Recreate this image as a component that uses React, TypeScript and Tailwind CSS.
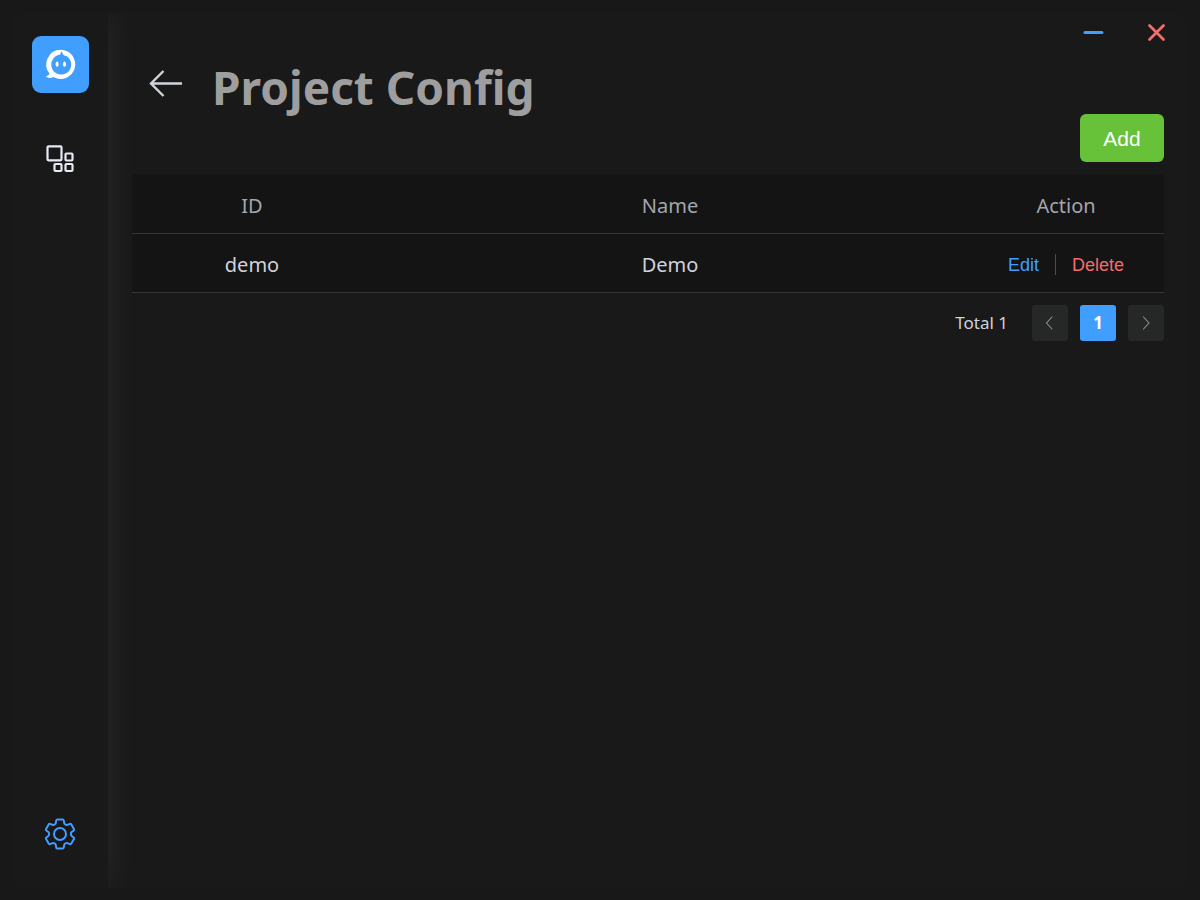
import React from "react";

const toothPoints: [number, number][] = [
  [-4.3, -10.1],
  [-3.6, -14.6],
  [3.6, -14.6],
  [4.3, -10.1],
];

function gearPath() {
  const pts: [number, number][] = [];
  for (let i = 0; i < 6; i++) {
    const a = (i * Math.PI) / 3;
    for (const [x, y] of toothPoints) {
      pts.push([
        x * Math.cos(a) - y * Math.sin(a),
        x * Math.sin(a) + y * Math.cos(a),
      ]);
    }
  }
  const n = pts.length;
  const toward = (p: [number, number], q: [number, number]) => {
    const d = Math.hypot(q[0] - p[0], q[1] - p[1]);
    const t = 1 / d;
    return `${(p[0] + (q[0] - p[0]) * t).toFixed(2)} ${(p[1] + (q[1] - p[1]) * t).toFixed(2)}`;
  };
  return (
    pts
      .map((p, i) => {
        const before = toward(p, pts[(i + n - 1) % n]);
        const after = toward(p, pts[(i + 1) % n]);
        return `${i ? "L" : "M"}${before}Q${p[0].toFixed(2)} ${p[1].toFixed(2)} ${after}`;
      })
      .join("") + "Z"
  );
}

function LogoIcon() {
  return (
    <svg viewBox="0 0 57 57" className="size-[57px]" aria-hidden="true">
      <path
        fill="#fff"
        fillRule="evenodd"
        d="M28.8 13.800A14.600 14.600 0 1 1 21.300 41C19 42.700 16.300 42.500 14 40.200C16 40 17 39 17.500 37.600A14.600 14.600 0 0 1 28.800 13.800ZM28.400 18.600A10 10 0 1 0 34.600 20.100C32.300 20.200 30.600 19 29.900 15.600C28.900 16.400 28.300 17.400 28.400 18.600Z"
      />
      <ellipse cx="25.100" cy="28.200" rx="1.500" ry="2.600" fill="#fff" />
      <ellipse cx="32.500" cy="28.200" rx="1.500" ry="2.600" fill="#fff" />
    </svg>
  );
}

function GridIcon() {
  return (
    <svg viewBox="0 0 28 28" className="size-7" fill="none" stroke="#e5eaf3" strokeWidth="2.200" aria-hidden="true">
      <rect x="1.500" y="1.300" width="14" height="14" rx="1" />
      <rect x="19.500" y="8.500" width="7" height="7" rx="1" />
      <rect x="8.500" y="19" width="7" height="7" rx="1" />
      <rect x="19.500" y="19" width="7" height="7" rx="1" />
    </svg>
  );
}

function GearIcon() {
  return (
    <svg viewBox="-16 -16 32 32" className="size-8" fill="none" stroke="#409eff" strokeWidth="2" aria-hidden="true">
      <path d={gearPath()} />
      <circle r="6" />
    </svg>
  );
}

function Chevron({ d }: { d: string }) {
  return (
    <svg viewBox="0 0 18 18" className="size-[18px]" fill="none" stroke="#8d9095" strokeWidth="1.100" strokeLinecap="round" aria-hidden="true">
      <path d={d} />
    </svg>
  );
}

const rows = [{ id: "demo", name: "Demo" }];

export default function App() {
  return (
    <div className="flex min-h-screen bg-[#181818] p-3 font-['Noto_Sans',sans-serif] text-[#cfd3dc]">
      <div className="flex min-w-0 flex-1 overflow-hidden rounded-xl bg-[#191919]">
        <aside className="z-10 flex w-24 shrink-0 flex-col items-center bg-[#191919] pt-6 pb-[38px] shadow-[0_0_36px_rgba(255,255,255,0.075)]">
          <a href="#home" aria-label="Home" className="rounded-[9px] bg-[#409eff]">
            <LogoIcon />
          </a>
          <a href="#projects" aria-label="Projects" className="mt-[52px]">
            <GridIcon />
          </a>
          <a href="#settings" aria-label="Settings" className="mt-auto">
            <GearIcon />
          </a>
        </aside>

        <div className="flex min-w-0 flex-1 flex-col px-6">
          <div className="-mr-2 flex justify-end gap-8 pt-1">
            <button type="button" aria-label="Minimize" className="flex size-8 items-center justify-center">
              <svg viewBox="0 0 32 32" className="size-8" aria-hidden="true">
                <path d="M9 16.500H26" stroke="#409eff" strokeWidth="3" strokeLinecap="round" />
              </svg>
            </button>
            <button type="button" aria-label="Close" className="flex size-8 items-center justify-center">
              <svg viewBox="0 0 32 32" className="size-8" aria-hidden="true">
                <path d="M9.500 9.500L23.500 23.500M23.500 9.500L9.500 23.500" stroke="#f56c6c" strokeWidth="2.800" strokeLinecap="round" />
              </svg>
            </button>
          </div>

          <header className="flex h-[66px] items-center pl-4">
            <button type="button" aria-label="Back">
              <svg viewBox="0 0 36 36" className="size-9" fill="none" stroke="#cfd3dc" strokeWidth="2.400" aria-hidden="true">
                <path d="M34 20.500H3M15.500 8L3 20.500L15.500 33" />
              </svg>
            </button>
            <h1 className="ml-7 pt-3 text-[46px] leading-[54px] font-bold text-[#9e9e9e]">Project Config</h1>
          </header>

          <main>
            <div className="flex justify-end pb-3">
              <button type="button" className="h-12 w-[84px] rounded-md bg-[#67c23a] pt-0.5 font-['Liberation_Sans',sans-serif] text-[21px] text-white">
                Add
              </button>
            </div>

            <table className="w-full table-fixed border-collapse bg-[#141414] text-center text-[20px] leading-[35px]">
              <colgroup>
                <col className="w-60" />
                <col />
                <col className="w-49" />
              </colgroup>
              <thead>
                <tr className="h-[59px] border-b border-[#363637] text-[#a3a6ad]">
                  <th className="pt-1 font-normal">ID</th>
                  <th className="pt-1 font-normal">Name</th>
                  <th className="pt-1 font-normal">Action</th>
                </tr>
              </thead>
              <tbody>
                {rows.map((row) => (
                  <tr key={row.id} className="h-[59px] border-b border-[#363637]">
                    <td className="pt-1">{row.id}</td>
                    <td className="pt-1">{row.name}</td>
                    <td className="pt-1">
                      <div className="flex items-center justify-center gap-4 font-['Liberation_Sans',sans-serif] text-lg">
                        <button type="button" className="text-[#409eff]">Edit</button>
                        <span className="h-[21px] w-px bg-[#4c4d4f]" />
                        <button type="button" className="text-[#f56c6c]">Delete</button>
                      </div>
                    </td>
                  </tr>
                ))}
              </tbody>
            </table>

            <nav aria-label="Pagination" className="flex items-center justify-end gap-3 pt-3 text-[17px] leading-9">
              <span className="mr-3">Total 1</span>
              <button type="button" aria-label="Previous page" className="flex size-9 items-center justify-center rounded-[3px] bg-[#262727]">
                <Chevron d="M11 3L5.500 9L11 15" />
              </button>
              <button type="button" aria-current="page" className="size-9 rounded-[3px] bg-[#409eff] font-bold text-white">1</button>
              <button type="button" aria-label="Next page" className="flex size-9 items-center justify-center rounded-[3px] bg-[#262727]">
                <Chevron d="M6.500 3L12 9L6.500 15" />
              </button>
            </nav>
          </main>
        </div>
      </div>
    </div>
  );
}
